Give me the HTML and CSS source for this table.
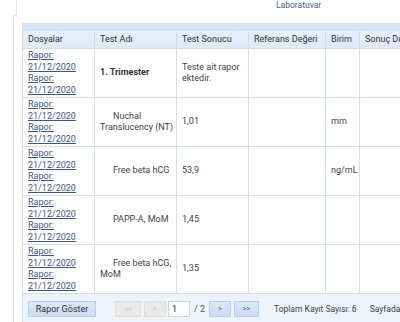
FILE: index.html
```html
<!DOCTYPE html>
<html lang="tr">
<head>
<meta charset="utf-8">
<link rel="stylesheet" href="styles.css">
</head>
<body>
<div class="page">
  <div class="head"><span class="title">Laboratuvar</span></div>
  <div class="panel">
    <div class="nub"></div>
    <div class="grid">
      <div class="cap"></div>
      <table class="tbl">
        <colgroup>
          <col class="c1"><col class="c2"><col class="c3"><col class="c4"><col class="c5"><col class="c6">
        </colgroup>
        <thead>
          <tr><th>Dosyalar</th><th>Test Adı</th><th>Test Sonucu</th><th>Referans Değeri</th><th>Birim</th><th>Sonuç Durumu</th></tr>
        </thead>
        <tbody>
          <tr>
            <td><a href="#">Rapor:<br>21/12/2020</a><br><a href="#">Rapor:<br>21/12/2020</a></td>
            <td><b>1. Trimester</b></td>
            <td>Teste ait rapor ektedir.</td>
            <td></td><td></td><td></td>
          </tr>
          <tr>
            <td><a href="#">Rapor:<br>21/12/2020</a><br><a href="#">Rapor:<br>21/12/2020</a></td>
            <td class="ind">Nuchal Translucency (NT)</td>
            <td>1,01</td>
            <td></td><td>mm</td><td></td>
          </tr>
          <tr>
            <td><a href="#">Rapor:<br>21/12/2020</a><br><a href="#">Rapor:<br>21/12/2020</a></td>
            <td class="ind">Free beta hCG</td>
            <td>53,9</td>
            <td></td><td>ng/mL</td><td></td>
          </tr>
          <tr>
            <td><a href="#">Rapor:<br>21/12/2020</a><br><a href="#">Rapor:<br>21/12/2020</a></td>
            <td class="ind">PAPP-A, MoM</td>
            <td>1,45</td>
            <td></td><td></td><td></td>
          </tr>
          <tr>
            <td><a href="#">Rapor:<br>21/12/2020</a><br><a href="#">Rapor:<br>21/12/2020</a></td>
            <td class="ind">Free beta hCG, MoM</td>
            <td>1,35</td>
            <td></td><td></td><td></td>
          </tr>
        </tbody>
      </table>
      <div class="foot">
        <button class="btn main">Rapor Göster</button>
        <div class="pager">
          <button class="pb off w26">&lt;&lt;</button>
          <button class="pb off">&lt;</button>
          <input class="pin" value="1">
          <span class="of">/ 2</span>
          <button class="pb on">&gt;</button>
          <button class="pb on w25">&gt;&gt;</button>
        </div>
        <span class="total">Toplam Kayıt Sayısı: 6</span>
        <span class="pages">Sayfadaki Kayıt Sayısı</span>
      </div>
    </div>
  </div>
</div>
</body>
</html>
```
FILE: styles.css
```css
html, body {
  margin: 0;
  padding: 0;
  background: #fff;
  overflow: hidden;
  width: 400px;
  height: 322px;
}
body {
  font-family: Roboto, "Liberation Sans", sans-serif;
  font-size: 9px;
  color: #444;
}
.page {
  width: 520px;
}
.head {
  margin-left: 16px;
  height: 15px;
  border-left: 1px solid #e4e4e4;
  display: flex;
  justify-content: flex-start;
}
.title {
  margin-left: 259px;
  line-height: 11px;
  color: #3f5f8f;
  font-size: 8.5px;
}
.panel {
  margin-left: 13px;
  border-left: 1px solid #e4e4e4;
  padding-left: 8px;
  height: 307px;
}
.nub {
  width: 3px;
  height: 0;
  border-top: 1px solid #e4e4e4;
  margin-left: -8px;
}
.grid {
  margin-top: 7px;
  width: 480px;
}
.cap {
  height: 8px;
  background: #d6e4f6;
}
.tbl {
  border-collapse: collapse;
  table-layout: fixed;
  width: 480px;
}
.c1 { width: 72px; }
.c2 { width: 82px; }
.c3 { width: 72px; }
.c4 { width: 77px; }
.c5 { width: 34px; }
.c6 { width: 143px; }
.tbl th {
  height: 17px;
  padding: 0 2px 0 5px;
  text-align: left;
  font-weight: normal;
  color: #333;
  background: linear-gradient(#e6eefa, #dfe9f7);
  border: 1px solid #cfdceb;
  border-top: none;
  white-space: nowrap;
  overflow: hidden;
  line-height: 17px;
}
.tbl td {
  height: 46px;
  padding: 1px 1px 1px 5px;
  vertical-align: middle;
  border: 1px solid #d3dee9;
  line-height: 11.5px;
  color: #444;
}
.tbl a {
  color: #3d5784;
  text-decoration: underline;
}
.tbl b {
  font-weight: bold;
  color: #333;
}
.ind {
  text-indent: 13px;
}
.foot {
  height: 30px;
  background: #eef3fa;
  border-bottom: 1px solid #d3dee9;
  border-left: 1px solid #d3dee9;
  display: flex;
  align-items: center;
  padding-left: 5px;
  white-space: nowrap;
  font-size: 8.5px;
}
.btn.main {
  width: 68px;
  height: 16px;
  padding: 0;
  font-family: inherit;
  font-size: 9px;
  color: #333;
  background: linear-gradient(#dce8f8, #cbdcf2);
  border: 1px solid #bccde4;
  border-radius: 0;
}
.pager {
  display: flex;
  align-items: center;
  margin-left: 19px;
  gap: 2px;
}
.pb {
  width: 22px;
  height: 16px;
  padding: 0;
  font-family: inherit;
  font-size: 7px;
  border-radius: 0;
}
.pb.w26 { width: 26px; margin-right: 1px; }
.pb.w25 { width: 25px; margin-left: 1px; }
.pb.off {
  background: #e9e9e9;
  border: 1px solid #dedede;
  color: #c4c4c4;
}
.pb.on {
  background: linear-gradient(#dce8f8, #cbdcf2);
  border: 1px solid #bccde4;
  color: #4a5f80;
}
.pin {
  width: 22px;
  height: 16px;
  box-sizing: border-box;
  padding: 0 3px;
  border: 1px solid #cfd6df;
  font-family: inherit;
  font-size: 9px;
  color: #333;
  background: #fff;
}
.of {
  margin: 0 2px;
  color: #555;
  font-size: 9px;
}
.total {
  margin-left: 15px;
  color: #444;
}
.pages {
  margin-left: 13px;
  color: #444;
}
```
